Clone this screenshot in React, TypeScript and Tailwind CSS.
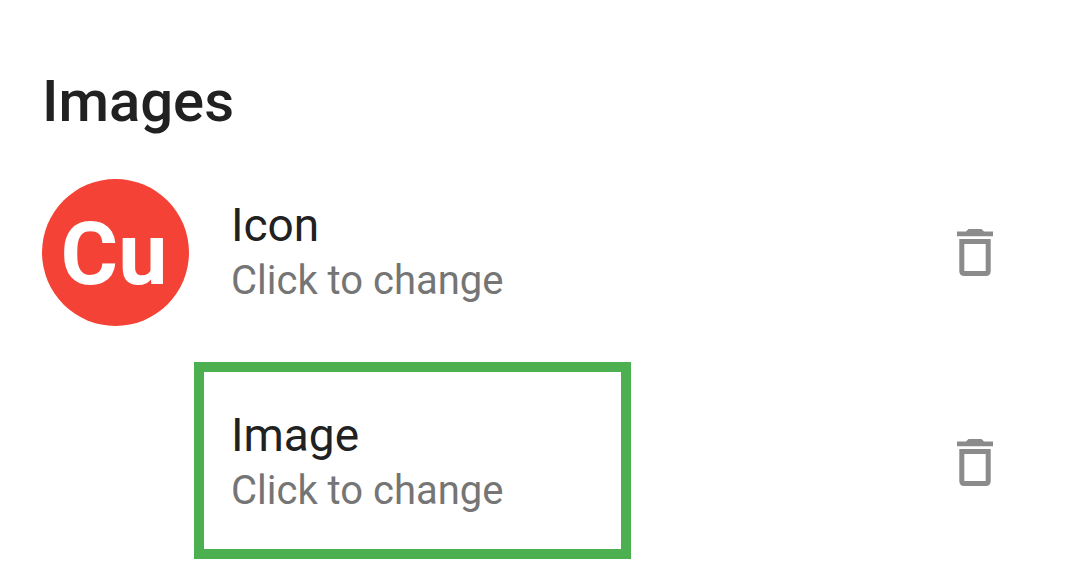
const rows = [
  { title: "Icon", hint: "Click to change", badge: "Cu", selected: false },
  { title: "Image", hint: "Click to change", badge: "", selected: true },
];

function TrashIcon() {
  return (
    <svg viewBox="0 0 36 47" className="h-[47px] w-9" aria-hidden="true">
      <path
        fill="#8b8b8b"
        fillRule="evenodd"
        d="M11.500 0H24.500L27 2.500H36V7.300H0V2.500H9ZM2.300 10H33.700V42Q33.700 47 28.700 47H7.300Q2.300 47 2.300 42ZM7.300 15V42H28.700V15Z"
      />
    </svg>
  );
}

export default function App() {
  return (
    <main className="min-h-screen bg-white pt-[67px] font-[Roboto,sans-serif] text-[#212121]">
      <h1 className="px-[42px] text-[58px] leading-[68px] font-medium">Images</h1>
      <ul className="pt-3">
        {rows.map((row) => (
          <li key={row.title} className="flex h-[210px] items-center pr-[67px] pl-[42px]">
            <div className="w-[152px] shrink-0">
              {row.badge && (
                <div className="flex size-[147px] items-center justify-center rounded-full bg-[#f44336] pt-[3px] pr-[3px] text-[88px] leading-none font-bold text-white">
                  {row.badge}
                </div>
              )}
            </div>
            <button
              type="button"
              className={`mb-1 h-[197px] w-[437px] border-[10px] pt-2 pl-[27px] text-left ${
                row.selected ? "border-[#4caf50]" : "border-transparent"
              }`}
            >
              <span className="block text-[46px] leading-[54px]">{row.title}</span>
              <span className="block text-[40px] leading-[58px] text-[#757575]">{row.hint}</span>
            </button>
            <button type="button" aria-label={`Delete ${row.title.toLowerCase()}`} className="ml-auto p-5">
              <TrashIcon />
            </button>
          </li>
        ))}
      </ul>
    </main>
  );
}
